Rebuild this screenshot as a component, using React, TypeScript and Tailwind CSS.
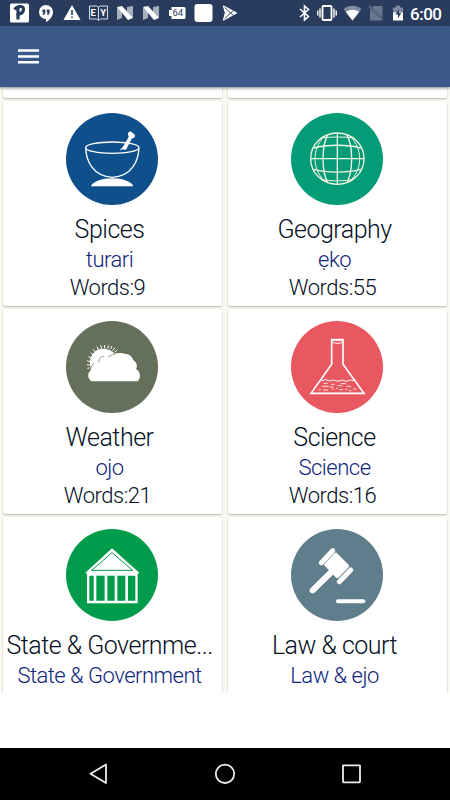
import React from 'react';

interface Category {
  title: string;
  translation: string;
  words?: number;
  color: string;
  icon: React.ReactNode;
}

const SpicesIcon = () => (
  <g fill="none" stroke="white" strokeWidth="4">
    <ellipse cx="172" cy="127" rx="80" ry="17" />
    <path d="M92 129C94 165 112 213 172 216C232 213 250 165 252 129" />
    <path d="M193 136L203 132L213 133L231 99C240 98 241 93 239 88C236 83 233 84 229 79C224 77 218 81 219 87L221 95L204 124Z" fill="white" stroke="none" />
    <path d="M108 243C112 229 142 219 172 219C202 219 230 229 235 243Z" fill="white" stroke="none" />
  </g>
);

const GlobeIcon = () => (
  <g fill="none" stroke="#f4f7e4" strokeWidth="4">
    <ellipse cx="172" cy="160" rx="80" ry="77" />
    <path d="M172 83V237M92 160H252" />
    <path d="M144 87C124 122 124 198 144 233M200 87C220 122 220 198 200 233" />
    <path d="M132 94C96 132 96 188 132 226M212 94C248 132 248 188 212 226" strokeWidth="3" />
    <path d="M102 128C140 117 204 117 242 128M102 192C140 203 204 203 242 192" />
    <path d="M123 98C150 94 194 94 221 98M123 222C150 228 194 228 221 222" strokeWidth="3" />
  </g>
);

const WeatherIcon = () => (
  <g>
    <path
      d="M104 164L97 165M104 155L96 154M105 145L96 142M109 135L100 130M115 125L107 118M122 117L115 108M131 110L126 100M140 106L137 96M149 105L149 95M158 106L161 96M166 108L171 98M173 112L180 103M179 117L187 110"
      stroke="white"
      strokeWidth="3"
    />
    <path d="M106 162C99 129 119 106 144 106C160 106 172 113 178 121L150 160Z" fill="white" />
    <path
      d="M109 203C97 196 97 180 107 171C106 151 119 142 132 146C132 130 149 122 160 131C177 118 197 118 209 121C226 121 233 133 235 141C245 147 249 159 243 167C255 173 259 190 250 202C248 204 244 204 240 204H113Z"
      fill="white"
    />
    <path d="M107 168C108 158 112 152 118 149M131 148C131 136 138 129 148 129M159 131C166 126 173 124 180 122" fill="none" stroke="#65705a" strokeWidth="2" />
  </g>
);

const ScienceIcon = () => (
  <g fill="none" stroke="white" strokeWidth="5">
    <path d="M155 79V153L93 240H252L189 153V79Z" />
    <ellipse cx="172" cy="85" rx="15" ry="5" strokeWidth="3" />
    <path d="M124 202L137 199L148 203L160 200L174 204L187 200L199 204L211 200L222 202" strokeWidth="3" />
    <path
      d="M131 210H143M153 213H164M183 211H198M126 219H147M150 221H160M172 217H187M199 219H213M116 229H123M130 230H145M156 227H161M168 225H173M178 229H189M196 228H202M207 232H214M220 227H229"
      strokeWidth="2.5"
    />
  </g>
);

const GovernmentIcon = () => (
  <g>
    <path d="M171 81L253 154L248 158V246H96V158L91 154Z" fill="white" />
    <path d="M171 94L233 147H110Z" fill="white" stroke="#009c4b" strokeWidth="3" />
    <path d="M103 163H116V238H103ZM124 163H149V238H124ZM157 163H179V238H157ZM187 163H211V238H187ZM219 163H241V238H219Z" fill="#009c4b" />
  </g>
);

const LawIcon = () => (
  <g stroke="white" strokeLinecap="round">
    <path d="M138 129L167 100L201 134L172 164Z" fill="white" strokeWidth="12" strokeLinejoin="round" />
    <path d="M124 124L158 88M178 181L212 146" stroke="#607d8b" strokeWidth="18" />
    <path d="M124 124L158 88M178 181L212 146" strokeWidth="15" />
    <path d="M151 155L98 207" strokeWidth="18" />
    <path d="M174 240H250" strokeWidth="12" />
  </g>
);

const categories: Category[] = [
  { title: 'Spices', translation: 'turari', words: 9, color: '#0f508c', icon: <SpicesIcon /> },
  { title: 'Geography', translation: 'ẹkọ', words: 55, color: '#049b77', icon: <GlobeIcon /> },
  { title: 'Weather', translation: 'ojo', words: 21, color: '#65705a', icon: <WeatherIcon /> },
  { title: 'Science', translation: 'Science', words: 16, color: '#e95860', icon: <ScienceIcon /> },
  { title: 'State & Governme...', translation: 'State & Government', color: '#009c4b', icon: <GovernmentIcon /> },
  { title: 'Law & court', translation: 'Law & ejo', color: '#607d8b', icon: <LawIcon /> },
];

const StatusBar = () => (
  <div className="h-[26px] shrink-0 bg-[#293c5e] flex items-center pl-[10px] pr-[9px] text-white">
    <svg width="230" height="26" viewBox="10 0 230 26" fill="white">
      <rect x="10" y="3.5" width="19" height="19" rx="1.5" />
      <path d="M18 19.5V8M14.5 9.5C17 6 24 5 23.5 9.5C23 14 19 14.5 16.5 13.5" fill="none" stroke="#293c5e" strokeWidth="3.2" />
      <path d="M46 5A7 7 0 0 0 46 19V22C50 20 53 16 53 12A7 7 0 0 0 46 5Z" />
      <path d="M42.5 9.5H45.3V13L44 15H42.7L43.5 12.5H42.5ZM46.8 9.5H49.6V13L48.3 15H47L47.8 12.5H46.8Z" fill="#293c5e" />
      <path d="M72 5L80.5 20H63.5Z" />
      <path d="M71.2 10H72.8V15H71.2ZM71.2 16.5H72.8V18H71.2Z" fill="#293c5e" />
      <path d="M89.5 6H96.5L98.5 7L100.5 6H107.5V19H100.5L98.5 20.5L96.5 19H89.5ZM98.5 7V20" fill="none" stroke="#d5dae4" strokeWidth="1" />
      <text x="90.5" y="16" fontSize="9.5" fontWeight="700">E</text>
      <text x="100.3" y="16" fontSize="9.5" fontWeight="700">Y</text>
      {[117, 143].map((x) => (
        <g key={x} transform={`translate(${x} 6)`}>
          <path d="M0 1L5 6V12L0 14ZM10 1L16 0V12L10 8Z" opacity="0.6" />
          <path d="M0 1L5 0L16 12L11 14Z" />
        </g>
      ))}
      <path d="M171.5 7H184A1.5 1.5 0 0 1 185.5 8.5V17.5A1.5 1.5 0 0 1 184 19H171.5V16H169V10H171.5Z" />
      <text x="172.5" y="16.3" fontSize="9.5" fill="#293c5e">64</text>
      <rect x="194.5" y="4" width="18" height="18" rx="3" />
      <path d="M223.5 6L236.5 13L223.5 20L225.5 13Z" fill="white" stroke="white" strokeWidth="1.2" strokeLinejoin="round" />
      <path d="M224.5 7.5L233.5 15.5M224.5 18.5L233.5 10.5" stroke="#293c5e" strokeWidth="0.9" />
    </svg>
    <svg className="ml-auto" width="110" height="26" viewBox="296 0 110 26" fill="white">
      <path d="M300 9L308.5 16.5L304.5 20V6L308.5 9.5L300 17" fill="none" stroke="white" strokeWidth="1.6" />
      <rect x="322.5" y="6" width="9" height="14" rx="1" fill="none" stroke="white" strokeWidth="1.8" />
      <path d="M320 8.5V17.5M317.8 10.5V15.5M334 8.5V17.5M336.2 10.5V15.5" stroke="white" strokeWidth="1.4" />
      <path d="M343.5 9C349 4.8 356 4.8 361.5 9L352.5 20.5Z" opacity="0.4" />
      <path d="M345.8 12C350 9 355 9 359.2 12L352.5 20.5Z" />
      <path d="M374 6H382.5V18L372 7.5ZM370 9L382 20.5H370Z" opacity="0.3" />
      <path d="M369 6L382.5 20" stroke="#6f7b92" strokeWidth="1.3" />
      <path d="M396 5.5H400V7.5H403V13H393V7.5H396Z" opacity="0.4" />
      <path d="M393 12.5H403V20.5H393Z" />
      <path d="M399 9L395.5 14.5H398V18.5L401.2 13H399Z" fill="#293c5e" />
    </svg>
    <span className="w-[31px] ml-[4px] mt-[2px] text-right text-[17px] leading-[26px] font-medium tracking-[-0.5px]">6:00</span>
  </div>
);

const CategoryCard: React.FC<{ category: Category }> = ({ category }) => (
  <div className="h-[205px] rounded-[2px] bg-white pt-[11.5px] text-center font-light whitespace-nowrap text-[#06101f] shadow-[0_1px_2px_rgba(60,60,40,0.35)]">
    <svg className="ml-[62.5px] block" width="92" height="92" viewBox="33 23 276 276">
      <circle cx="171" cy="161" r="138" fill={category.color} />
      {category.icon}
    </svg>
    <h2 className="mt-[10px] pr-[6px] text-[25px] leading-[30px] tracking-[-0.5px]">{category.title}</h2>
    <p className="pr-[6px] text-[22px] leading-[29px] tracking-[-0.5px] text-[#0d2480]">{category.translation}</p>
    {category.words !== undefined && (
      <p className="pr-[10px] text-[22px] leading-[27px] tracking-[-0.5px]">Words:{category.words}</p>
    )}
  </div>
);

const App: React.FC = () => {
  return (
    <div className="flex h-[800px] w-[450px] flex-col overflow-hidden bg-white font-['Roboto',sans-serif]">
      <StatusBar />

      <header className="z-10 flex h-[61px] shrink-0 items-center bg-[#3b5a89] pl-[18px] shadow-[0_1px_3px_rgba(0,0,0,0.5)]">
        <svg width="21" height="15" viewBox="0 0 21 15" fill="white">
          <path d="M0 0.3H21V2.8H0ZM0 6.2H21V8.7H0ZM0 12.1H21V14.6H0Z" />
        </svg>
      </header>

      <main className="grid h-[606px] shrink-0 auto-rows-max grid-cols-2 gap-x-[6px] gap-y-[3px] overflow-hidden bg-[#fafaf4] px-[3px]">
        <div className="h-[11px] rounded-b-[2px] bg-white shadow-[0_1px_2px_rgba(60,60,40,0.35)]" />
        <div className="h-[11px] rounded-b-[2px] bg-white shadow-[0_1px_2px_rgba(60,60,40,0.35)]" />
        {categories.map((category) => (
          <CategoryCard key={category.title} category={category} />
        ))}
      </main>

      <nav className="mt-auto flex h-[52px] shrink-0 items-center bg-black">
        <svg width="450" height="52" viewBox="0 0 450 52" fill="none" stroke="#eeeeee" strokeWidth="1.8">
          <path d="M106 16.5V35L90.5 25.8Z" strokeLinejoin="round" />
          <circle cx="225" cy="25.8" r="9.2" />
          <rect x="343" y="17.3" width="17" height="17" rx="0.5" />
        </svg>
      </nav>
    </div>
  );
};

export default App;
